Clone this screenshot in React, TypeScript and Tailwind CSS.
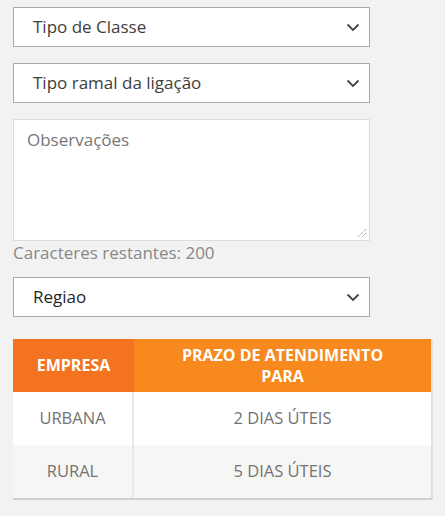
import React from "react";

function Chevron() {
  return (
    <svg width="14" height="9" viewBox="0 0 14 9" className="shrink-0">
      <path d="M1.5 1.5 L7 7 L12.5 1.5" fill="none" stroke="#444" strokeWidth="1.8" />
    </svg>
  );
}

function Select({ label, dark }: { label: string; dark?: boolean }) {
  return (
    <div className="flex h-[40px] w-[357px] items-center justify-between border border-[#a9a9a9] bg-white pl-[19px] pr-[9px]">
      <span className={`text-[17px] ${dark ? "text-[#1f1f1f]" : "text-[#3d3d3d]"}`}>{label}</span>
      <Chevron />
    </div>
  );
}

export default function App() {
  return (
    <div
      className="min-h-[516px] w-[445px] bg-[#f2f2f2] pl-[13px] pt-[7px]"
      style={{ fontFamily: '"Open Sans", "DejaVu Sans", sans-serif' }}
    >
      <div className="flex flex-col gap-[16px]">
        <Select label="Tipo de Classe" />
        <Select label="Tipo ramal da ligação" />
      </div>
      <div className="relative mt-[16px] h-[122px] w-[357px] border border-[#dcdcdc] bg-white px-[13px] pt-[7px]">
        <span className="text-[17px] text-[#777]">Observações</span>
        <svg width="12" height="12" viewBox="0 0 12 12" className="absolute bottom-[2px] right-[2px]">
          <path d="M11 3 L3 11 M11 7 L7 11" stroke="#777" strokeWidth="1" strokeDasharray="1 1" />
        </svg>
      </div>
      <div className="mt-[1px] text-[17px] leading-[22px] text-[#888]">Caracteres restantes: 200</div>
      <div className="mt-[13px]">
        <Select label="Regiao" dark />
      </div>
      <div className="mt-[22px] w-[420px] border-b-2 border-r-2 border-[#e0e0e0] border-b-[#cfcfcf]">
        <div className="flex h-[53px] text-[16px] font-bold leading-[21px] text-white">
          <div className="flex w-[121px] items-center justify-center bg-[#f47321]">EMPRESA</div>
          <div className="flex flex-1 items-center justify-center bg-[#f7891f] text-center">
            PRAZO DE ATENDIMENTO<br />PARA
          </div>
        </div>
        <div className="flex h-[53px] bg-white text-[16.5px] text-[#737373]">
          <div className="flex w-[121px] items-center justify-center border-r-2 border-[#e8e8e8]">URBANA</div>
          <div className="flex flex-1 items-center justify-center">2 DIAS ÚTEIS</div>
        </div>
        <div className="flex h-[53px] bg-[#f6f6f4] text-[16.5px] text-[#737373]">
          <div className="flex w-[121px] items-center justify-center border-r-2 border-[#e8e8e8]">RURAL</div>
          <div className="flex flex-1 items-center justify-center">5 DIAS ÚTEIS</div>
        </div>
      </div>
    </div>
  );
}
